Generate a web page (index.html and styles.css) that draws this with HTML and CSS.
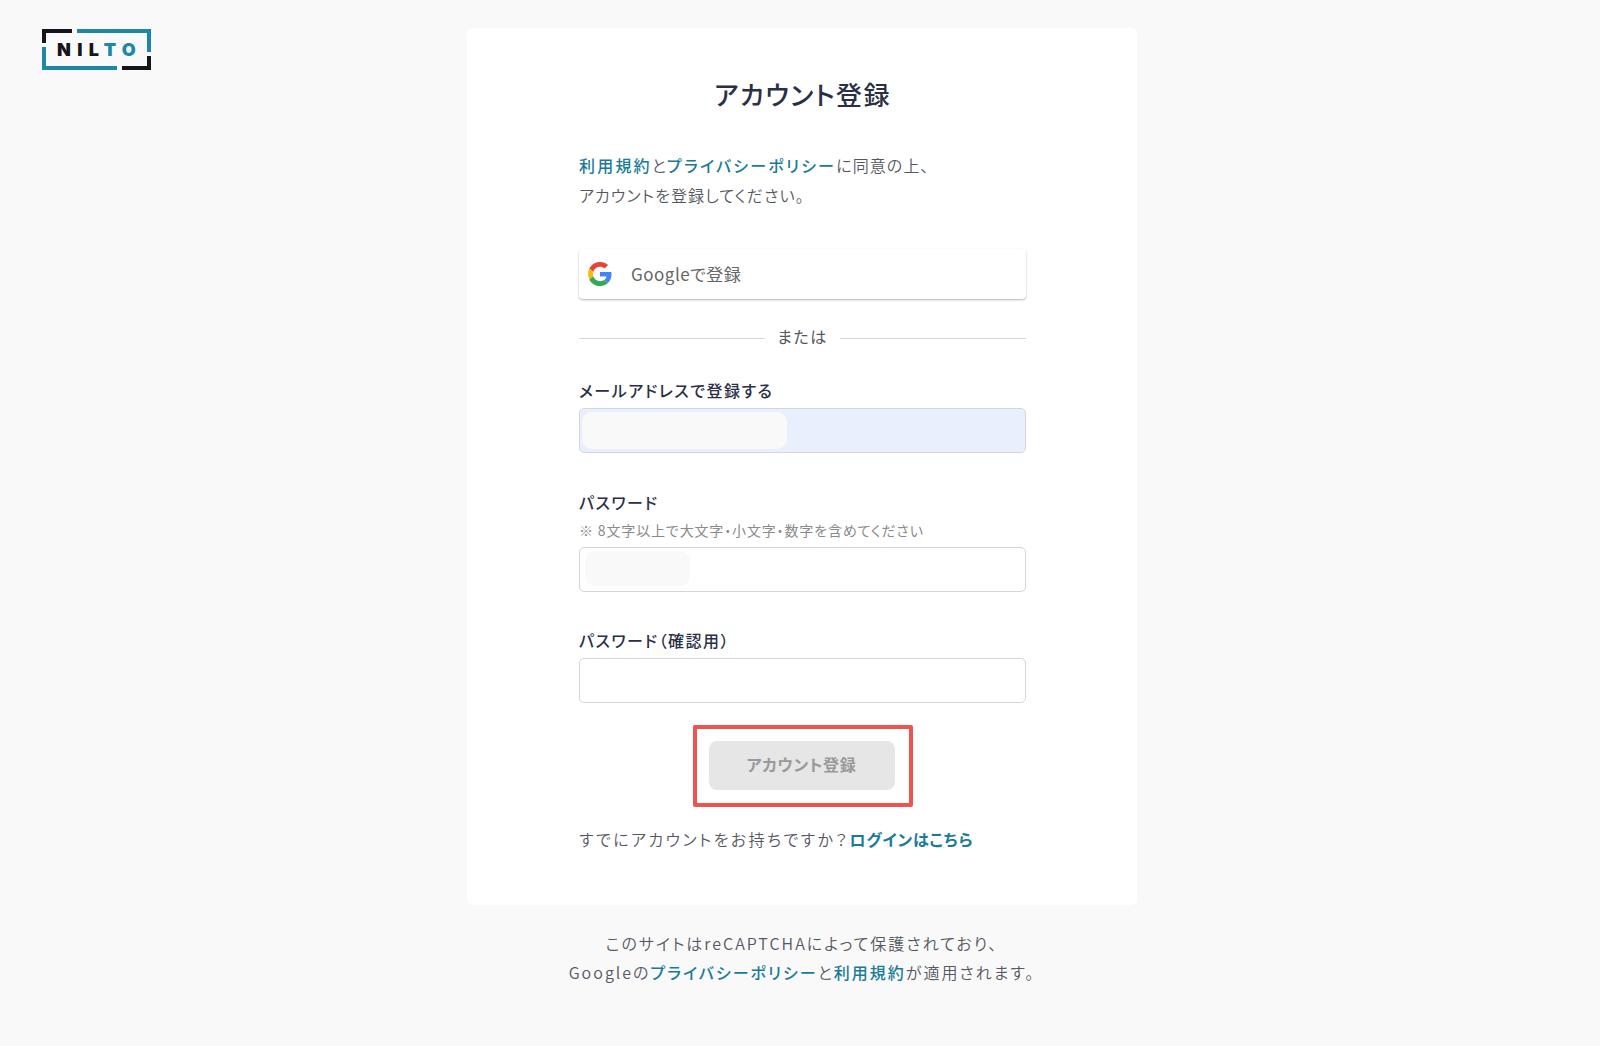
FILE: index.html
```html
<!DOCTYPE html>
<html lang="ja">
<head>
  <title>アカウント登録</title>
  <meta charset="UTF-8">
  <link rel="stylesheet" href="styles.css">
</head>
<body>
  <div class="page">
    <header class="brand">
      <svg class="logo" width="110" height="42" viewBox="0 0 110 42">
        <path d="M2 14V2H30" fill="none" stroke="#15151b" stroke-width="4"/>
        <path d="M35 2H107V23" fill="none" stroke="#1c87a6" stroke-width="4"/>
        <path d="M2 18V39H75" fill="none" stroke="#1c87a6" stroke-width="4"/>
        <path d="M80 39H107V27" fill="none" stroke="#15151b" stroke-width="4"/>
        <text class="logo-text" x="15" y="27">NIL<tspan fill="#1c87a6">TO</tspan></text>
      </svg>
    </header>

    <main class="column">
      <div class="card">
        <h1 class="title">アカウント登録</h1>
        <p class="lead">
          <a href="#">利用規約</a>と<a href="#">プライバシーポリシー</a>に同意の上、<br>アカウントを登録してください。
        </p>

        <button class="google-btn" type="button">
          <svg width="24" height="24" viewBox="0 0 48 48">
            <path fill="#EA4335" d="M24 9.5c3.5 0 6.700 1.200 9.200 3.600l6.900-6.900C35.900 2.400 30.500 0 24 0 14.600 0 6.500 5.400 2.600 13.200l8 6.200C12.400 13.700 17.700 9.500 24 9.500z"/>
            <path fill="#4285F4" d="M46.980 24.550c0-1.570-.15-3.090-.38-4.550H24v9.020h12.940c-.58 2.960-2.260 5.480-4.780 7.180l7.730 6c4.510-4.180 7.090-10.360 7.090-17.650z"/>
            <path fill="#FBBC05" d="M10.530 28.590c-.48-1.450-.76-2.990-.76-4.590s.27-3.140.76-4.590l-7.980-6.190C.92 16.460 0 20.120 0 24c0 3.880.92 7.540 2.560 10.780l7.970-6.190z"/>
            <path fill="#34A853" d="M24 48c6.480 0 11.930-2.130 15.890-5.810l-7.730-6c-2.150 1.450-4.920 2.300-8.160 2.300-6.260 0-11.570-4.220-13.470-9.910l-7.980 6.190C6.510 42.620 14.620 48 24 48z"/>
          </svg>
          <span>Googleで登録</span>
        </button>

        <div class="divider"><span class="divider-text">または</span></div>

        <form class="form">
          <div class="field field-email">
            <label class="label" for="email">メールアドレスで登録する</label>
            <div class="input-wrap">
              <input class="input input-filled" id="email" type="text">
              <span class="mask mask-email"></span>
            </div>
          </div>

          <div class="field field-password">
            <label class="label" for="password">パスワード</label>
            <p class="hint">※ 8文字以上で大文字・小文字・数字を含めてください</p>
            <div class="input-wrap">
              <input class="input" id="password" type="text">
              <span class="mask mask-password"></span>
            </div>
          </div>

          <div class="field field-confirm">
            <label class="label" for="confirm">パスワード（確認用）</label>
            <div class="input-wrap">
              <input class="input" id="confirm" type="text">
            </div>
          </div>

          <div class="submit-row">
            <div class="highlight">
              <button class="submit" type="button" disabled>アカウント登録</button>
            </div>
          </div>
        </form>

        <p class="login">すでにアカウントをお持ちですか？<a href="#">ログインはこちら</a></p>
      </div>

      <footer class="footer">
        このサイトはreCAPTCHAによって保護されており、<br>Googleの<a href="#">プライバシーポリシー</a>と<a href="#">利用規約</a>が適用されます。
      </footer>
    </main>
  </div>
</body>
</html>
```

FILE: styles.css
```css
:root {
  --teal: #1a7b96;
  --text: #555762;
  --dark: #2a2f45;
  --border: #d5d5de;
}
* { box-sizing: border-box; }
html, body { margin: 0; padding: 0; }
body {
  background-color: #f9f9f9;
  color: var(--text);
  font-family: "Noto Sans CJK JP", "Noto Sans", sans-serif;
  font-size: 16px;
  font-feature-settings: "palt";
}
a { color: var(--teal); font-weight: 500; text-decoration: none; }

.page { display: grid; grid-template-columns: 467px 670px 1fr; min-height: 1046px; }
.brand { padding: 29px 0 0 42px; }
.logo { display: block; }
.logo-text { font-family: "Inter", sans-serif; font-size: 18px; font-weight: 900; letter-spacing: 6.3px; fill: #15151b; }

.column { padding-top: 28px; }
.card { background-color: #fff; border-radius: 6px; padding: 48px 111px 0 112px; height: 877px; }
.title { margin: 0; font-size: 26px; font-weight: 500; line-height: 36px; letter-spacing: 1.4px; color: var(--dark); text-align: center; }
.lead { margin: 38px 0 0; line-height: 30px; letter-spacing: 1.1px; font-weight: 350; }
.lead a { letter-spacing: 2.2px; }

.google-btn {
  display: flex;
  align-items: center;
  gap: 19px;
  width: 100%;
  height: 50px;
  margin-top: 39px;
  padding: 0 9px 1px;
  background-color: #fff;
  border: none;
  border-radius: 4px;
  box-shadow: 0 1px 2px rgba(0, 0, 0, 0.3);
  color: #666;
  font-family: inherit;
  font-size: 17px;
  font-feature-settings: "palt";
  letter-spacing: 0.5px;
}

.divider { display: flex; align-items: center; gap: 12px; margin-top: 26px; height: 26px; letter-spacing: 1.6px; font-size: 16px; }
.divider::before, .divider::after { content: ""; flex: 1; height: 1px; background-color: var(--border); }
.divider-text { padding-bottom: 5px; }

.field-email { margin-top: 27px; }
.field-password { margin-top: 37px; }
.field-confirm { margin-top: 36px; }
.label { display: block; font-size: 16px; font-weight: 500; line-height: 24px; color: var(--dark); letter-spacing: 1.5px; margin-bottom: 6px; }
.hint { margin: -1px 0 6px; font-size: 14px; line-height: 22px; color: #8a8a8a; letter-spacing: 0.85px; }
.input-wrap { position: relative; }
.input { display: block; width: 100%; height: 45px; background-color: #fff; border: 1px solid var(--border); border-radius: 5px; outline: none; }
.input-filled { background-color: #e8f0fe; }
.mask { position: absolute; background-color: #f9f9f9; border-radius: 10px; }
.mask-email { left: 3px; top: 4px; width: 205px; height: 37px; }
.mask-password { left: 6px; top: 4px; width: 105px; height: 35px; }

.submit-row { display: flex; justify-content: center; margin-top: 22px; }
.highlight { padding: 12px 14px 13px 12px; border: 4px solid #ef5350; border-radius: 2px; }
.submit { display: block; width: 186px; height: 49px; padding: 0 0 3px; border: none; border-radius: 8px; background-color: #e6e6e6; color: #999; font-family: inherit; font-size: 16px; font-weight: 700; font-feature-settings: "palt"; letter-spacing: 0.7px; }

.login { margin: 17px 0 0; line-height: 30px; letter-spacing: 2.4px; font-weight: 350; }
.login a { font-weight: 700; letter-spacing: 0.8px; }
.footer { margin-top: 24px; text-align: center; line-height: 29px; letter-spacing: 2px; font-weight: 350; }
```
